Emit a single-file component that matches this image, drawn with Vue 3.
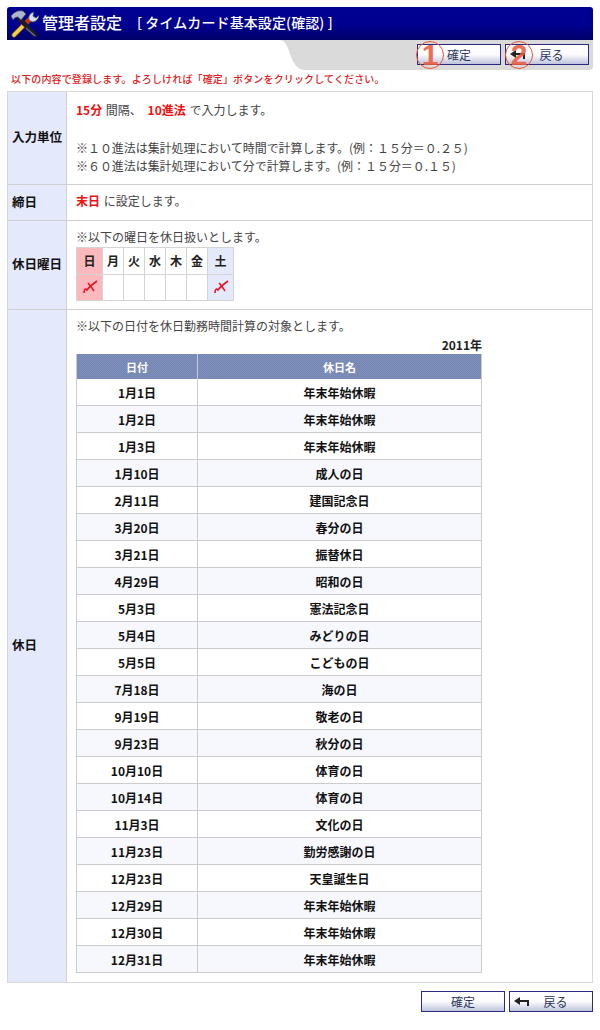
<script setup>
const days = [
  { n: '日', mark: true, cls: 'sun wide' },
  { n: '月' }, { n: '火' }, { n: '水' }, { n: '木' }, { n: '金' },
  { n: '土', mark: true, cls: 'sat wide' },
]
const holidays = [
  ['1月1日', '年末年始休暇'], ['1月2日', '年末年始休暇'], ['1月3日', '年末年始休暇'],
  ['1月10日', '成人の日'], ['2月11日', '建国記念日'], ['3月20日', '春分の日'],
  ['3月21日', '振替休日'], ['4月29日', '昭和の日'], ['5月3日', '憲法記念日'],
  ['5月4日', 'みどりの日'], ['5月5日', 'こどもの日'], ['7月18日', '海の日'],
  ['9月19日', '敬老の日'], ['9月23日', '秋分の日'], ['10月10日', '体育の日'],
  ['10月14日', '体育の日'], ['11月3日', '文化の日'], ['11月23日', '勤労感謝の日'],
  ['12月23日', '天皇誕生日'], ['12月29日', '年末年始休暇'], ['12月30日', '年末年始休暇'],
  ['12月31日', '年末年始休暇'],
]
</script>

<template>
  <div class="page">
    <header class="title">
      <svg class="tools" viewBox="0 0 30 30" width="30" height="30">
        <path d="M5 26 L22 9" stroke="#7a5a10" stroke-width="5" stroke-linecap="round" />
        <path d="M5 26 L14 17" stroke="#f4cf50" stroke-width="3.6" stroke-linecap="round" />
        <path d="M14 17 L21 10" stroke="#d8241c" stroke-width="3.4" />
        <path d="M26 26 L10 9" stroke="#1c1c24" stroke-width="4.4" stroke-linecap="round" />
        <path d="M17 19 L26 27" stroke="#6a6a70" stroke-width="1.5" />
        <path d="M2 7 C5 3 9 1 14 2 L17 5 L12 11 L9 8 C7 8 5 9 4 11 Z" fill="#aab4cc" stroke="#3c4258" stroke-width="0.7" />
        <path d="M20 11 C19 7 21 4 25 3 L24 7 L27 9 L30 6 C30 10 27 13 23 13 Z" fill="#d8dce6" stroke="#3c4258" stroke-width="0.7" />
      </svg>
      <span class="t1">管理者設定</span>
      <span class="t2">[ タイムカード基本設定(確認) ]</span>
    </header>
    <div class="subbar">
      <div class="tab">
        <button class="btn top-ok">確定<span class="num n1">1</span></button>
        <button class="btn top-back">
          <svg class="arrow" viewBox="0 0 16 10" width="16" height="10"><path d="M0 4 L6 0 V3 H15 V9 H13 V5 H6 V8 Z" fill="#222" /></svg>
          戻る<span class="num n2">2</span>
        </button>
      </div>
    </div>
    <p class="msg">以下の内容で登録します。よろしければ「確定」ボタンをクリックしてください。</p>

    <div class="form">
      <div class="row r1">
        <div class="label">入力単位</div>
        <div class="value">
          <p class="line"><b>15分</b> 間隔、 <b class="gap">10進法</b> で入力します。</p>
          <p class="note first">※１０進法は集計処理において時間で計算します。(例：１５分＝０.２５)</p>
          <p class="note">※６０進法は集計処理において分で計算します。(例：１５分＝０.１５)</p>
        </div>
      </div>
      <div class="row r2">
        <div class="label">締日</div>
        <div class="value"><p class="line"><b>末日</b> に設定します。</p></div>
      </div>
      <div class="row r3">
        <div class="label">休日曜日</div>
        <div class="value">
          <p class="line">※以下の曜日を休日扱いとします。</p>
          <div class="days">
            <div v-for="d in days" :key="d.n" class="day" :class="d.cls">
              <div class="dh">{{ d.n }}</div>
              <div class="dv">
                <svg v-if="d.mark" viewBox="0 0 18 14" width="18" height="14">
                  <path d="M3 13 C3 10 4 9 5 9 L6 10 C9 6 12 4 16 1" fill="none" stroke="#ee1122" stroke-width="1.6" />
                  <path d="M7 3 C9 5 11 8 13 11" fill="none" stroke="#ee1122" stroke-width="1.6" />
                </svg>
              </div>
            </div>
          </div>
        </div>
      </div>
      <div class="row r4">
        <div class="label">休日</div>
        <div class="value">
          <p class="line">※以下の日付を休日勤務時間計算の対象とします。</p>
          <div class="year">2011年</div>
          <div class="hol">
            <div class="hh c1">日付</div>
            <div class="hh">休日名</div>
            <template v-for="(h, i) in holidays" :key="i">
              <div class="hc c1" :class="{ odd: i % 2 === 1 }">{{ h[0] }}</div>
              <div class="hc" :class="{ odd: i % 2 === 1 }">{{ h[1] }}</div>
            </template>
          </div>
        </div>
      </div>
    </div>

    <div class="foot">
      <button class="btn foot-ok">確定</button>
      <button class="btn foot-back">
        <svg class="arrow" viewBox="0 0 16 10" width="16" height="10"><path d="M0 4 L6 0 V3 H15 V9 H13 V5 H6 V8 Z" fill="#222" /></svg>
        戻る
      </button>
    </div>
  </div>
</template>

<style>
html, body { margin: 0; background: #fff; }
</style>

<style scoped>
.page {
  width: 586px;
  height: 1030px;
  box-sizing: border-box;
  padding-top: 7px;
  margin-left: 7px;
  font-family: "Noto Sans CJK JP", "Liberation Sans", sans-serif;
  font-size: 12px;
  color: #444;
  overflow: hidden;
}
p { margin: 0; }
.title {
  height: 33px;
  box-sizing: border-box;
  display: flex;
  align-items: center;
  background:
    repeating-conic-gradient(rgba(0, 0, 40, 0.22) 0 25%, transparent 0 50%) 0 0 / 2px 2px,
    linear-gradient(#0000a0 0, #00009c 55%, #000070 100%);
  border-radius: 3px 3px 0 0;
  color: #fff;
  padding: 0 0 3px 2px;
}
.tools { flex: none; margin: 3px 3px 0 0; }
.t1 { font-size: 16px; font-weight: 500; margin-right: 15px; }
.t2 { font-size: 14px; font-weight: 500; letter-spacing: 0.1px; }
.subbar { height: 30px; display: flex; justify-content: flex-end; }
.tab {
  width: 313px;
  height: 30px;
  background: #dadada;
  clip-path: path('M0 0 H313 V26 Q313 30 309 30 H26 C16 30 13 22 10 14 C8 6 4 0 0 0 Z');
  display: flex;
  justify-content: flex-end;
  gap: 4px;
  padding: 4px 4px 0 0;
  box-sizing: border-box;
}
.btn {
  position: relative;
  width: 84px;
  height: 21px;
  padding: 0;
  box-sizing: border-box;
  border: 1px solid #2a2a80;
  border-radius: 0;
  background: linear-gradient(#ffffff 0, #fcfcff 50%, #bfc4dc 100%);
  font: 12px "Noto Sans CJK JP", sans-serif;
  color: #2a3560;
  text-align: center;
}
.arrow { position: absolute; left: 4px; top: 5px; }
.num {
  position: absolute;
  top: -4px;
  width: 28px;
  height: 28px;
  box-sizing: border-box;
  border: 1px solid #ee5533;
  border-radius: 50%;
  color: rgba(238, 90, 60, 0.9);
  font: bold 30px/26px "Liberation Sans", sans-serif;
  text-align: center;
}
.n1 { left: -2px; }
.n2 { left: -1px; }
.msg { margin-top: 0; height: 21px; font-size: 10px; line-height: 18px; letter-spacing: 0.14px; color: #d22; padding-left: 4px; font-weight: 500; }
.form { border: 1px solid #d8d8d8; }
.row { display: flex; }
.row + .row { border-top: 1px solid #d0d0d0; }
.r1 { height: 92px; }
.r2 { height: 35px; }
.r3 { height: 88px; }
.r4 { height: 672px; }
.label {
  width: 59px;
  flex: none;
  background: #e4eafc;
  border-right: 1px solid #d0d0d0;
  display: flex;
  align-items: center;
  padding: 0 0 3px 4px;
  box-sizing: border-box;
  font-size: 12.5px;
  font-weight: 700;
  color: #111;
}
.value { flex: 1; padding: 9px 0 0 9px; min-width: 0; }
.line { line-height: 18px; }
.line b { color: #ee1111; font-weight: 700; margin-right: 1px; }
.line b.gap { margin-left: 3px; }
.note { line-height: 18px; letter-spacing: -0.06px; }
.note.first { margin-top: 20px; }
.r2 .value { padding-top: 7px; }
.r3 .value { padding-top: 7px; }
.days { display: flex; margin-top: 1px; border: 1px solid #d4d4d4; border-right: 0; border-bottom: 0; width: fit-content; }
.day { width: 21px; box-sizing: border-box; border-right: 1px solid #d4d4d4; text-align: center; }
.day.wide { width: 26px; }
.dh, .dv { height: 26.5px; display: flex; align-items: center; justify-content: center; box-sizing: border-box; border-bottom: 1px solid #d4d4d4; }
.dh { font-weight: 700; color: #222; }
.sun { background: #fbb9bd; }
.sat { background: #e4eafc; }
.r4 .value { padding-top: 7px; }
.year { width: 406px; text-align: right; font-weight: 700; line-height: 17px; color: #222; margin: 1px 0; }
.hol {
  display: grid;
  grid-template-columns: 121px 283px;
  width: 406px;
  box-sizing: border-box;
  border-right: 1px solid #ccc;
  border-left: 1px solid #ccc;
}
.hh {
  height: 25px;
  background:
    repeating-conic-gradient(rgba(255, 255, 255, 0.08) 0 25%, transparent 0 50%) 0 0 / 2px 2px,
    #7486b4;
  color: #fff;
  font-size: 11px;
  font-weight: 700;
  display: flex;
  align-items: center;
  justify-content: center;
}
.hc {
  height: 27px;
  box-sizing: border-box;
  border-bottom: 1px solid #ccc;
  display: flex;
  align-items: center;
  justify-content: center;
  font-weight: 700;
  color: #111;
  background: #fff;
}
.hc.odd { background: #f7f8fe; }
.c1 { border-right: 1px solid #ccc; }
.foot { display: flex; justify-content: flex-end; gap: 4px; margin-top: 8px; }
.foot .btn { height: 21px; }
.foot-back, .top-back { padding-left: 9px; }
</style>
